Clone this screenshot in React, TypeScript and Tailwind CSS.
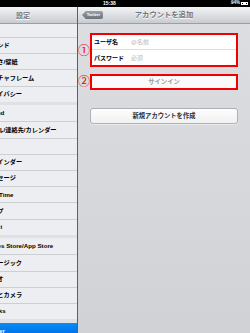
import React from "react";

const groups: string[][] = [
  ["一般", "サウンド", "明るさ/壁紙", "ピクチャフレーム", "プライバシー"],
  ["iCloud", "メール/連絡先/カレンダー", "メモ", "リマインダー", "メッセージ", "FaceTime", "マップ", "Safari"],
  ["iTunes Store/App Store", "ミュージック", "ビデオ", "写真とカメラ", "iBooks"],
  ["Twitter", "Facebook"],
];

const font = "font-['Liberation_Sans','Noto_Sans_CJK_JP',sans-serif]";

function Sidebar() {
  return (
    <div className="w-[78px] shrink-0 flex flex-col border-r border-[#5d6066] bg-[#dfe1e5]">
      <div className="h-[17px] shrink-0 flex items-center pl-[16px] bg-gradient-to-b from-[#f3f4f6] to-[#c8cbd0] border-b border-[#9a9ea5]">
        <span className="text-[7px] leading-none font-bold text-[#71767e] [text-shadow:0_0.5px_0_#fff]">設定</span>
      </div>
      <div className="flex-1 overflow-hidden">
        <div className="mt-[-3.2px] flex flex-col gap-[3.5px]">
          {groups.map((g, gi) => (
            <div key={gi} className="flex flex-col">
              {g.map((label, i) => {
                const selected = label === "Twitter";
                return (
                  <div
                    key={label}
                    className={
                      "h-[16.2px] flex items-center " +
                      (i > 0 ? "border-t border-[#cdcfd3] " : "") +
                      (selected
                        ? "bg-gradient-to-b from-[#0a8df5] to-[#0262e6] text-white"
                        : "bg-[#eceef1] text-black")
                    }
                  >
                    <span className="ml-[-15px] whitespace-nowrap text-[6.2px] leading-none font-bold">{label}</span>
                  </div>
                );
              })}
            </div>
          ))}
        </div>
      </div>
    </div>
  );
}

function Detail() {
  return (
    <div className="flex-1 flex flex-col relative bg-gradient-to-b from-[#dcdee2] to-[#cfd1d5]">
      <div className="h-[17px] shrink-0 grid grid-cols-[1fr_auto_1fr] items-center bg-gradient-to-b from-[#f3f4f6] to-[#c8cbd0] border-b border-[#9a9ea5]">
        <div className="pl-[4px] flex items-center">
          <div className="h-[8.5px] w-[21px] flex items-center justify-center pl-[2px] bg-gradient-to-b from-[#9aa0a8] to-[#6c727b] rounded-r-[2px] [clip-path:polygon(0_50%,4px_0,100%_0,100%_100%,4px_100%)]">
            <span className="text-[4.2px] leading-none font-bold text-white">Twitter</span>
          </div>
        </div>
        <span className="text-[7.3px] leading-none font-bold text-[#71767e] [text-shadow:0_0.5px_0_#fff]">アカウントを追加</span>
        <div />
      </div>
      <div className="flex flex-col px-[12px] pt-[9px]">
        <div className="h-[34px] flex flex-col border-2 border-[#f00000] bg-white">
          <div className="h-[15px] flex items-center pl-[2px] border-b border-[#dcdcdc]">
            <span className="w-[37px] text-[6px] leading-none font-bold text-black">ユーザ名</span>
            <span className="text-[6px] leading-none text-[#b8b8b8]">@名前</span>
          </div>
          <div className="flex-1 flex items-center pl-[2px]">
            <span className="w-[37px] text-[6px] leading-none font-bold text-black">パスワード</span>
            <span className="text-[6px] leading-none text-[#b8b8b8]">必須</span>
          </div>
        </div>
        <div className="mt-[7px] h-[16px] flex items-center justify-center border-2 border-[#f00000] bg-[#fafafa]">
          <span className="text-[6.3px] leading-none font-bold text-[#9c9c9c]">サインイン</span>
        </div>
        <div className="mt-[18px] h-[16px] flex items-center justify-center rounded-[3px] border border-[#adb1b7] bg-gradient-to-b from-[#fdfdfd] to-[#f1f1f2] shadow-[0_0.5px_0_#fff]">
          <span className="text-[6.3px] leading-none font-bold text-[#2f2f2f]">新規アカウントを作成</span>
        </div>
      </div>
      <span className="absolute left-0 top-[37.5px] text-[12px] leading-none text-[#f00000]">①</span>
      <span className="absolute left-0 top-[68.5px] text-[12px] leading-none text-[#f00000]">②</span>
    </div>
  );
}

export default function App() {
  return (
    <div className={"w-[250px] h-[333px] overflow-hidden flex flex-col bg-black " + font}>
      <div className="h-[7px] shrink-0 flex items-center bg-black text-white">
        <span className="ml-[103px] text-[5px] leading-none font-bold">15:38</span>
        <div className="ml-auto mr-[2px] flex items-center gap-[1px]">
          <span className="text-[4.5px] leading-none font-bold">94%</span>
          <div className="w-[7px] h-[3.5px] border-[0.5px] border-white p-[0.5px]">
            <div className="w-[85%] h-full bg-white" />
          </div>
        </div>
      </div>
      <div className="flex-1 flex">
        <Sidebar />
        <Detail />
      </div>
    </div>
  );
}
